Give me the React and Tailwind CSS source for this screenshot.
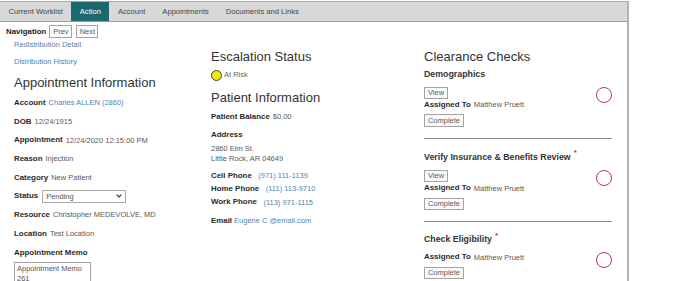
import React from "react";

const Lbl = ({ children }) => (
  <span className="font-bold text-[7.9px] text-[#2a2a2a]">{children}</span>
);
const Val = ({ children, blue }) => (
  <span className={`text-[7.5px] ${blue ? "text-[#5284b0]" : "text-[#595959]"}`}>{children}</span>
);

const Btn = ({ children, w, h = "h-[12px]" }) => (
  <div className={`${w} ${h} border border-[#a3a3a3] bg-[#fbfbfb] flex items-center justify-center text-[7.5px] text-[#5a5a5a]`}>
    {children}
  </div>
);

const Circle = ({ mt = "mt-0" }) => (
  <div className={`${mt} w-[16px] h-[16px] rounded-full border-[1.3px] border-[#b23a4c] shrink-0`} />
);

const Star = () => (
  <span className="relative -top-[4px] ml-[3px] text-[8px] font-bold text-[#c0303a]">*</span>
);

const LeftRow = ({ children }) => (
  <div className="h-[18.7px] flex items-center gap-[3px]">{children}</div>
);

export default function App() {
  return (
    <div className="w-[688px] h-[281px] overflow-hidden bg-white font-['Liberation_Sans',Arial,sans-serif]">
      <div className="w-[629px] h-full border-r-2 border-[#b3b3b3]">
        {/* tab bar */}
        <div className="mt-px border-t border-b border-t-[#a8a8a8] border-b-[#9c9c9c] bg-[#d8d8d8] h-[21px] flex text-[7.6px] text-[#454545]">
          <div className="px-[8.5px] flex items-center">Current Worklist</div>
          <div className="px-[8.5px] flex items-center bg-[#1b6870] text-white">Action</div>
          <div className="px-[8.5px] flex items-center">Account</div>
          <div className="px-[8.5px] flex items-center">Appointments</div>
          <div className="px-[8.5px] flex items-center">Documents and Links</div>
        </div>

        {/* navigation */}
        <div className="pt-[3px] pl-[6px] flex items-center h-[16px]">
          <div className="h-[13px] flex items-center">
            <span className="font-bold text-[7.9px] text-[#222]">Navigation</span>
            <div className="ml-[3px]">
              <Btn w="w-[23px]" h="h-[13px]">Prev</Btn>
            </div>
            <div className="ml-[4px]">
              <Btn w="w-[22px]" h="h-[13px]">Next</Btn>
            </div>
          </div>
        </div>

        <div className="flex">
          {/* left column */}
          <div className="w-[211px] pl-[14px]">
            <div className="h-[14px] flex items-center text-[7.5px] text-[#4f80ad]">Redistribution Detail</div>
            <div className="h-[20px] flex items-center text-[7.5px] text-[#4f80ad]">Distribution History</div>
            <div className="h-[21.6px] flex items-center text-[13px] text-[#333]">Appointment Information</div>
            <LeftRow><Lbl>Account</Lbl><Val blue>Charles ALLEN (2860)</Val></LeftRow>
            <LeftRow><Lbl>DOB</Lbl><Val>12/24/1915</Val></LeftRow>
            <LeftRow><Lbl>Appointment</Lbl><Val>12/24/2020 12:15:00 PM</Val></LeftRow>
            <LeftRow><Lbl>Reason</Lbl><Val>Injection</Val></LeftRow>
            <LeftRow><Lbl>Category</Lbl><Val>New Patient</Val></LeftRow>
            <LeftRow>
              <Lbl>Status</Lbl>
              <div className="ml-[1px] w-[84px] h-[13px] border border-[#a8a8a8] bg-white flex items-center justify-between pl-[3px] pr-[3px]">
                <span className="text-[7.5px] text-[#555]">Pending</span>
                <svg width="6" height="4" viewBox="0 0 6 4">
                  <path d="M0.6 0.6 L3 3 L5.4 0.6" fill="none" stroke="#333" strokeWidth="1.1" />
                </svg>
              </div>
            </LeftRow>
            <LeftRow><Lbl>Resource</Lbl><Val>Christopher MEDEVOLVE, MD</Val></LeftRow>
            <LeftRow><Lbl>Location</Lbl><Val>Test Location</Val></LeftRow>
            <LeftRow><Lbl>Appointment Memo</Lbl></LeftRow>
            <div className="w-[77px] h-[40px] border border-[#a0a0a0] px-[2px] pt-[1px] text-[7.5px] leading-[10.5px] text-[#555]">
              <div>Appointment Memo</div>
              <div>261</div>
            </div>
          </div>

          {/* middle column */}
          <div className="w-[213px]">
            <div className="mt-[8px] h-[22px] flex items-center text-[13px] text-[#333]">Escalation Status</div>
            <div className="h-[14px] flex items-center gap-[2px]">
              <div className="w-[11px] h-[11px] rounded-full bg-[#f2ea00] border border-[#444]" />
              <span className="text-[7.5px] text-[#666]">At Risk</span>
            </div>
            <div className="mt-[6px] h-[19px] flex items-center text-[13px] text-[#333]">Patient Information</div>
            <div className="h-[19px] flex items-center gap-[3px]"><Lbl>Patient Balance</Lbl><Val>$0.00</Val></div>
            <div className="h-[17.5px] flex items-center"><Lbl>Address</Lbl></div>
            <div className="text-[7.5px] leading-[10.5px] text-[#595959]">
              <div>2860 Elm St.</div>
              <div>Little Rock, AR 04649</div>
            </div>
            <div className="mt-[4.5px] h-[13.3px] flex items-center gap-[6.5px]"><Lbl>Cell Phone</Lbl><Val blue>(971) 111-1139</Val></div>
            <div className="h-[13.3px] flex items-center gap-[6.5px]"><Lbl>Home Phone</Lbl><Val blue>(111) 113-9710</Val></div>
            <div className="h-[13.3px] flex items-center gap-[6.5px]"><Lbl>Work Phone</Lbl><Val blue>(113) 971-1115</Val></div>
            <div className="mt-[5.4px] h-[13.4px] flex items-center gap-[2px]"><Lbl>Email</Lbl><Val blue>Eugene C @email.com</Val></div>
          </div>

          {/* right column */}
          <div className="w-[188px]">
            <div className="mt-[8px] h-[22px] flex items-center text-[13px] text-[#333]">Clearance Checks</div>

            <div className="h-[14px] flex items-center font-bold text-[8.8px] text-[#333]">Demographics</div>
            <div className="mt-[4.7px] flex justify-between">
              <div>
                <Btn w="w-[24px]" h="h-[12.3px]">View</Btn>
                <div className="h-[12px] flex items-center gap-[3px]"><Lbl>Assigned To</Lbl><Val>Matthew Pruett</Val></div>
                <div className="mt-[3px]"><Btn w="w-[40px]" h="h-[12.7px]">Complete</Btn></div>
              </div>
              <Circle />
            </div>
            <div className="mt-[11.3px] h-px bg-[#8c8c8c]" />

            <div className="mt-[11px] h-[14.6px] flex items-center font-bold text-[8.8px] text-[#333]">
              Verify Insurance &amp; Benefits Review<Star />
            </div>
            <div className="mt-[5.4px] flex justify-between">
              <div>
                <Btn w="w-[24px]">View</Btn>
                <div className="h-[12.6px] flex items-center gap-[3px]"><Lbl>Assigned To</Lbl><Val>Matthew Pruett</Val></div>
                <div className="mt-[3.4px]"><Btn w="w-[40px]">Complete</Btn></div>
              </div>
              <Circle />
            </div>
            <div className="mt-[11.3px] h-px bg-[#8c8c8c]" />

            <div className="mt-[10.7px] h-[14px] flex items-center font-bold text-[8.8px] text-[#333]">
              Check Eligibility<Star />
            </div>
            <div className="mt-[4px] flex justify-between">
              <div>
                <div className="h-[12.6px] flex items-center gap-[3px]"><Lbl>Assigned To</Lbl><Val>Matthew Pruett</Val></div>
                <div className="mt-[3.1px]"><Btn w="w-[40px]">Complete</Btn></div>
              </div>
              <Circle mt="mt-[1px]" />
            </div>
          </div>
        </div>
      </div>
    </div>
  );
}
